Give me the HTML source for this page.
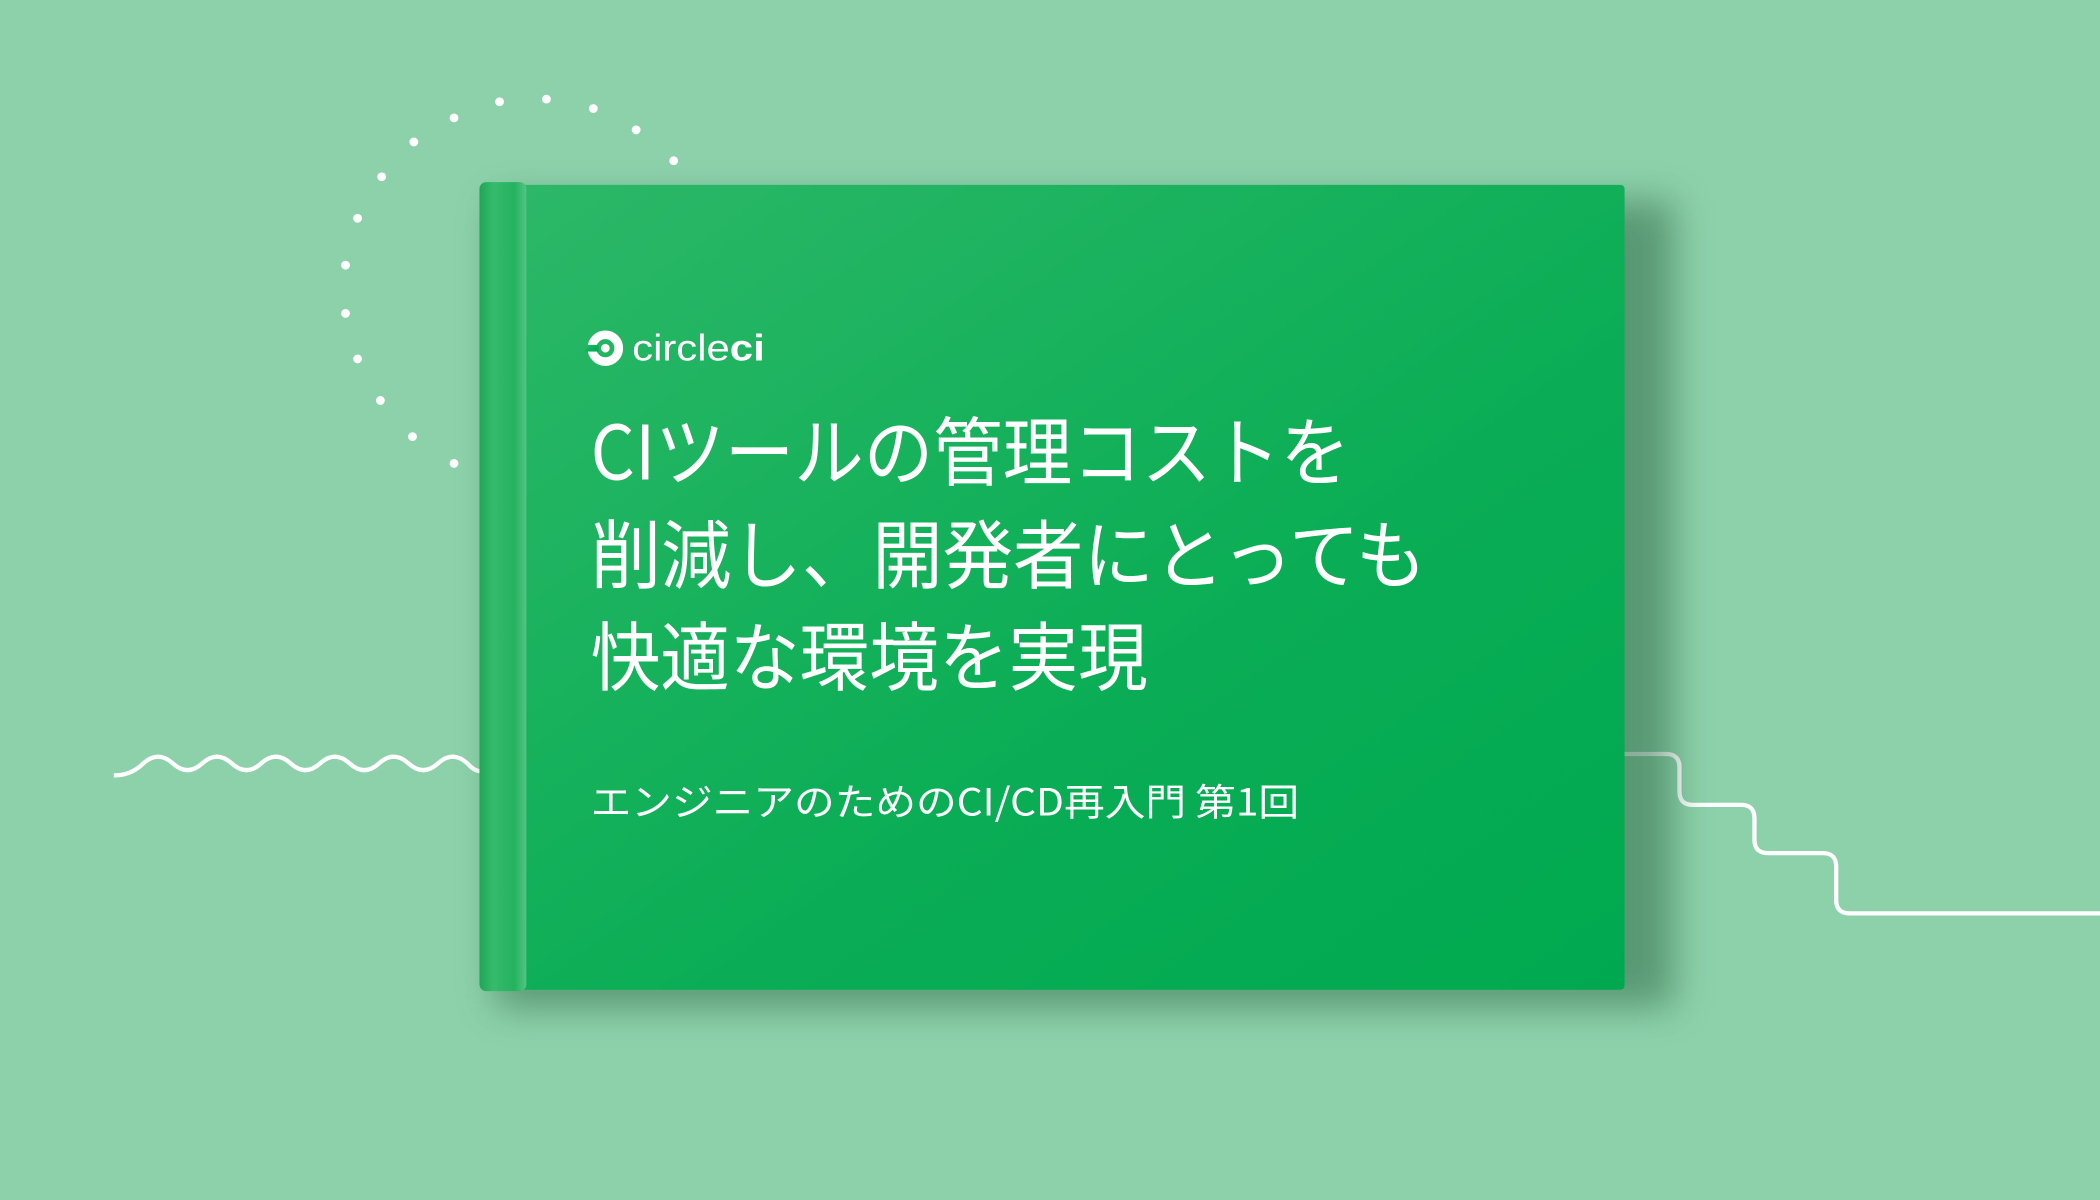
<!DOCTYPE html>
<html><head><meta charset="utf-8"><style>
html,body{margin:0;padding:0;width:2100px;height:1200px;overflow:hidden;background:#8dd1aa}
svg{display:block}
text{font-family:"Noto Sans CJK JP","Liberation Sans",sans-serif;fill:#fff}
.lg{font-family:"Liberation Sans","Noto Sans CJK JP",sans-serif}
</style></head><body>
<svg width="2100" height="1200" viewBox="0 0 1568 896" xmlns="http://www.w3.org/2000/svg">
<defs>
<linearGradient id="cov" x1="0" y1="0" x2="1" y2="1">
<stop offset="0" stop-color="#2db868"/><stop offset="0.6" stop-color="#0aad55"/><stop offset="1" stop-color="#00a94f"/>
</linearGradient>
<linearGradient id="sp" x1="0" y1="0" x2="1" y2="0">
<stop offset="0" stop-color="#1ea755"/><stop offset="0.3" stop-color="#35bb6c"/><stop offset="0.75" stop-color="#25b25f"/><stop offset="1" stop-color="#53c584"/>
</linearGradient>
<filter id="sh" x="-20%" y="-20%" width="140%" height="140%"><feGaussianBlur stdDeviation="14"/></filter>
</defs>
<rect width="1568" height="896" fill="#8dd1aa"/>
<g fill="#fff">
<circle cx="373" cy="76" r="3.3"/><circle cx="408" cy="74" r="3.3"/><circle cx="443" cy="81" r="3.3"/><circle cx="475" cy="97" r="3.3"/><circle cx="503" cy="120" r="3.3"/>
<circle cx="339" cy="88" r="3.3"/><circle cx="309" cy="106" r="3.3"/><circle cx="285" cy="132" r="3.3"/><circle cx="267" cy="163" r="3.3"/><circle cx="258" cy="198" r="3.3"/><circle cx="258" cy="234" r="3.3"/><circle cx="267" cy="268" r="3.3"/><circle cx="284" cy="299" r="3.3"/><circle cx="308" cy="326" r="3.3"/><circle cx="339" cy="346" r="3.3"/>
</g>
<path d="M85 579 Q98 579 107 570 Q118 560 129 570 Q140 580 151 570 Q162 560 173 570 Q184 580 195 570 Q206 560 217 570 Q228 580 239 570 Q250 560 261 570 Q272 580 283 570 Q294 560 305 570 Q316 580 327 570 Q338 560 349 570 Q354 576 360 576" fill="none" stroke="#fff" stroke-width="3.2"/>
<path d="M1210 563 H1244 Q1254 563 1254 573 V591 Q1254 601 1264 601 H1300 Q1310 601 1310 611 V627 Q1310 637 1320 637 H1361 Q1371 637 1371 647 V672 Q1371 682 1381 682 H1568" fill="none" stroke="#fff" stroke-width="3.2"/>
<rect x="370" y="150" width="880" height="602" fill="#2f6a46" opacity="0.55" filter="url(#sh)"/>
<rect x="360" y="138" width="853" height="601" rx="3" fill="url(#cov)"/>
<rect x="358" y="136" width="35" height="604" rx="5" fill="url(#sp)"/>
<circle cx="452" cy="260" r="10" fill="none" stroke="#fff" stroke-width="6.5"/>
<rect x="437" y="257.5" width="10" height="5" fill="url(#cov)"/>
<circle cx="452" cy="260" r="3.2" fill="#fff"/>
<text class="lg" x="472" y="269" font-size="28" textLength="99" lengthAdjust="spacingAndGlyphs">circle<tspan font-weight="bold">ci</tspan></text>
<text x="441" y="358" font-size="56" font-weight="400" textLength="567" lengthAdjust="spacingAndGlyphs">CIツールの管理コストを</text>
<text x="441" y="435" font-size="56" font-weight="400" textLength="624" lengthAdjust="spacingAndGlyphs">削減し、開発者にとっても</text>
<text x="441" y="511" font-size="56" font-weight="400" textLength="416" lengthAdjust="spacingAndGlyphs">快適な環境を実現</text>
<text x="441" y="609" font-size="28" font-weight="400" textLength="529" lengthAdjust="spacingAndGlyphs">エンジニアのためのCI/CD再入門 第1回</text>
</svg>
</body></html>
